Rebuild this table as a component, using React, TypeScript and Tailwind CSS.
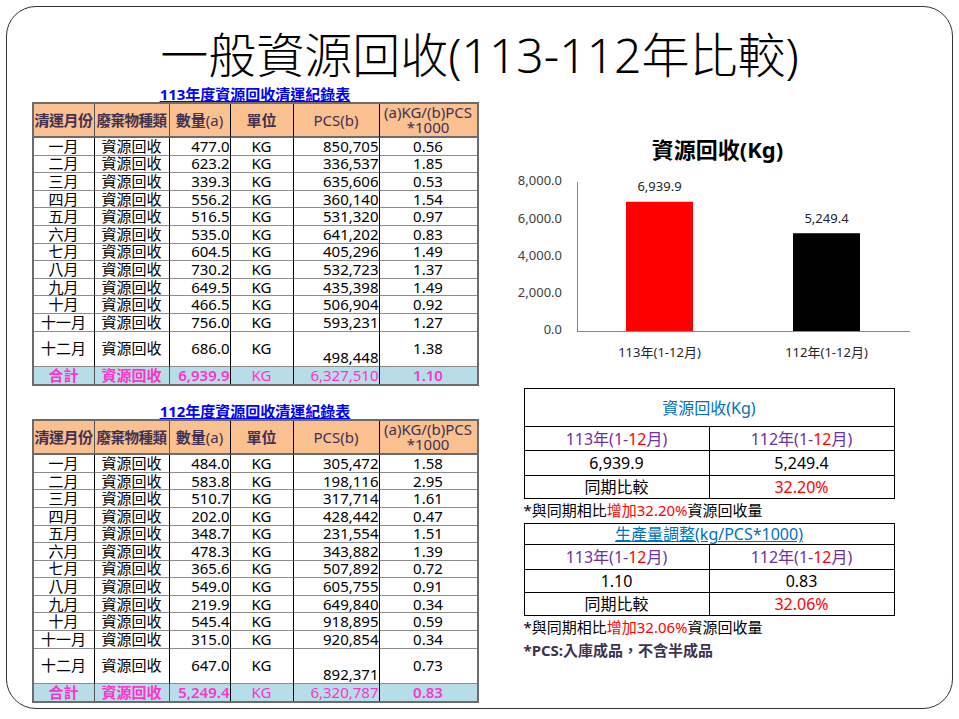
import React from 'react'

type Row = [string, string, string, string]

const rows113: Row[] = [
  ['一月', '477.0', '850,705', '0.56'],
  ['二月', '623.2', '336,537', '1.85'],
  ['三月', '339.3', '635,606', '0.53'],
  ['四月', '556.2', '360,140', '1.54'],
  ['五月', '516.5', '531,320', '0.97'],
  ['六月', '535.0', '641,202', '0.83'],
  ['七月', '604.5', '405,296', '1.49'],
  ['八月', '730.2', '532,723', '1.37'],
  ['九月', '649.5', '435,398', '1.49'],
  ['十月', '466.5', '506,904', '0.92'],
  ['十一月', '756.0', '593,231', '1.27'],
  ['十二月', '686.0', '498,448', '1.38'],
]

const rows112: Row[] = [
  ['一月', '484.0', '305,472', '1.58'],
  ['二月', '583.8', '198,116', '2.95'],
  ['三月', '510.7', '317,714', '1.61'],
  ['四月', '202.0', '428,442', '0.47'],
  ['五月', '348.7', '231,554', '1.51'],
  ['六月', '478.3', '343,882', '1.39'],
  ['七月', '365.6', '507,892', '0.72'],
  ['八月', '549.0', '605,755', '0.91'],
  ['九月', '219.9', '649,840', '0.34'],
  ['十月', '545.4', '918,895', '0.59'],
  ['十一月', '315.0', '920,854', '0.34'],
  ['十二月', '647.0', '892,371', '0.73'],
]

const vline = 'border-r border-r-black'
const hline = 'border-b-[1.5px] border-b-[#8c8c8c]'

function RecordTable({ title, rows, total }: { title: string; rows: Row[]; total: [string, string, string] }) {
  const head = 'flex items-center justify-center bg-[#fac090] text-[#403152] border-b-2 border-b-[#6b6b6b]'
  const sum = 'bg-[#b7dee8] text-[#ff33cc] flex items-center'
  return (
    <div>
      <div className="h-[16px] text-center text-[15px] leading-[16px] font-bold text-[#0000ff] underline">{title}</div>
      <div className="grid grid-cols-[61px_75px_61px_63px_86px_97px] grid-rows-[34px_repeat(11,17.6px)_35px_17.6px] border-2 border-[#6b6b6b] text-[15px] leading-none whitespace-nowrap">
        <div className={`${head} border-r border-r-[#555] font-bold tracking-[-0.5px]`}>清運月份</div>
        <div className={`${head} border-r border-r-[#555] font-bold text-[14.5px] tracking-[-0.5px]`}>廢棄物種類</div>
        <div className={`${head} border-r border-r-black`}>
          <span className="font-bold">數量</span>(a)
        </div>
        <div className={`${head} border-r border-r-black font-bold`}>單位</div>
        <div className={`${head} border-r border-r-black`}>PCS(b)</div>
        <div className={`${head} flex-col leading-[15px]`}>
          <span>(a)KG/(b)PCS</span>
          <span>*1000</span>
        </div>

        {rows.map((r, i) => {
          const last = i === rows.length - 1
          return (
            <React.Fragment key={r[0]}>
              <div className={`${vline} ${hline} flex items-center justify-center`}>{r[0]}</div>
              <div className={`${vline} ${hline} flex items-center justify-center`}>資源回收</div>
              <div className={`${vline} ${hline} flex items-center justify-end`}>{r[1]}</div>
              <div className={`${vline} ${hline} flex items-center justify-center`}>KG</div>
              <div className={`${vline} ${hline} flex justify-end ${last ? 'items-end pb-[1px]' : 'items-center'}`}>{r[2]}</div>
              <div className={`${hline} flex items-center justify-center`}>{r[3]}</div>
            </React.Fragment>
          )
        })}

        <div className={`${sum} border-r border-r-[#555] font-bold justify-center`}>合計</div>
        <div className={`${sum} border-r border-r-[#555] font-bold justify-center`}>資源回收</div>
        <div className={`${sum} ${vline} font-semibold justify-end`}>{total[0]}</div>
        <div className={`${sum} ${vline} justify-center`}>KG</div>
        <div className={`${sum} ${vline} justify-end`}>{total[1]}</div>
        <div className={`${sum} font-semibold justify-center`}>{total[2]}</div>
      </div>
    </div>
  )
}

function Year({ y }: { y: string }) {
  return (
    <span className="text-[#7030a0]">
      {y}年(1-<span className="text-[#ff0000]">12</span>月)
    </span>
  )
}

function CompareTable({
  title,
  titleClass,
  rowsClass,
  a,
  b,
  pct,
}: {
  title: string
  titleClass: string
  rowsClass: string
  a: string
  b: string
  pct: string
}) {
  const cell = 'flex items-center justify-center border-black'
  return (
    <div className={`w-[371px] grid grid-cols-[185px_1fr] ${rowsClass} border border-black text-[16px] leading-none`}>
      <div className={`col-span-2 ${cell} border-b text-[#0070c0] ${titleClass}`}>{title}</div>
      <div className={`${cell} border-b border-r`}>
        <Year y="113" />
      </div>
      <div className={`${cell} border-b`}>
        <Year y="112" />
      </div>
      <div className={`${cell} border-b border-r text-black`}>{a}</div>
      <div className={`${cell} border-b text-black`}>{b}</div>
      <div className={`${cell} border-r text-black`}>同期比較</div>
      <div className={`${cell} text-[#ff0000]`}>{pct}</div>
    </div>
  )
}

function Note({ pct }: { pct: string }) {
  return (
    <div className="h-[22px] flex items-center text-[15px] leading-none text-black">
      *與同期相比<span className="text-[#ff0000]">增加{pct}</span>資源回收量
    </div>
  )
}

function Chart() {
  const base = 162
  const scale = 149 / 8000
  const ticks = [8000, 6000, 4000, 2000, 0]
  const bars = [
    { x: 108, v: 6939.9, label: '6,939.9', fill: '#ff0000', name: '113年(1-12月)' },
    { x: 275, v: 5249.4, label: '5,249.4', fill: '#000000', name: '112年(1-12月)' },
  ]
  const font = "'Noto Sans', 'Noto Sans CJK TC', sans-serif"
  return (
    <svg width="400" height="200" className="block" fontFamily={font}>
      {ticks.map((t) => (
        <text key={t} x="44" y={base - t * scale} textAnchor="end" dominantBaseline="middle" fontSize="13" fill="#404040">
          {t === 0 ? '0.0' : `${t.toLocaleString('en-US')}.0`}
        </text>
      ))}
      <line x1="59.5" y1="13" x2="59.5" y2={base} stroke="#868686" strokeWidth="1" />
      <line x1="59" y1={base + 0.5} x2="392" y2={base + 0.5} stroke="#868686" strokeWidth="1" />
      {bars.map((b) => {
        const h = b.v * scale
        return (
          <g key={b.label}>
            <rect x={b.x} y={base - h} width="67" height={h} fill={b.fill} />
            <text x={b.x + 33.5} y={base - h - 14} textAnchor="middle" dominantBaseline="middle" fontSize="13" fill="#262626">
              {b.label}
            </text>
            <text x={b.x + 33.5} y="185" textAnchor="middle" dominantBaseline="middle" fontSize="13" fill="#262626">
              {b.name}
            </text>
          </g>
        )
      })}
    </svg>
  )
}

export default function App() {
  return (
    <div className="w-[959px] h-[719px] bg-white p-[6px] font-['Noto_Sans','Noto_Sans_CJK_TC',sans-serif] text-black">
      <div className="h-[703px] w-[947px] rounded-[30px] border-[1.5px] border-[#333] flex flex-col">
        <h1 className="mt-[24px] text-center text-[48px] leading-none font-light text-black">一般資源回收(113-112年比較)</h1>

        <div className="flex mt-[7px] ml-[24.5px]">
          <div className="w-[447px] flex flex-col">
            <RecordTable title="113年度資源回收清運紀錄表" rows={rows113} total={['6,939.9', '6,327,510', '1.10']} />
            <div className="mt-[17px]">
              <RecordTable title="112年度資源回收清運紀錄表" rows={rows112} total={['5,249.4', '6,320,787', '0.83']} />
            </div>
          </div>

          <div className="ml-[39px] w-[400px] flex flex-col">
            <div className="mt-[49px] h-[28px] text-center text-[22px] leading-[28px] font-bold text-black">資源回收(Kg)</div>
            <div className="mt-[6px]">
              <Chart />
            </div>
            <div className="mt-[19px] ml-[6px] flex flex-col">
              <CompareTable
                title="資源回收(Kg)"
                titleClass=""
                rowsClass="grid-rows-[38px_24px_25px_22px]"
                a="6,939.9"
                b="5,249.4"
                pct="32.20%"
              />
              <Note pct="32.20%" />
              <div className="mt-[2px]">
                <CompareTable
                  title="生產量調整(kg/PCS*1000)"
                  titleClass="underline"
                  rowsClass="grid-rows-[21px_25px_23px_22px]"
                  a="1.10"
                  b="0.83"
                  pct="32.06%"
                />
              </div>
              <Note pct="32.06%" />
              <div className="h-[24px] flex items-center text-[15px] leading-none font-bold text-[#403152]">*PCS:入庫成品，不含半成品</div>
            </div>
          </div>
        </div>
      </div>
    </div>
  )
}
